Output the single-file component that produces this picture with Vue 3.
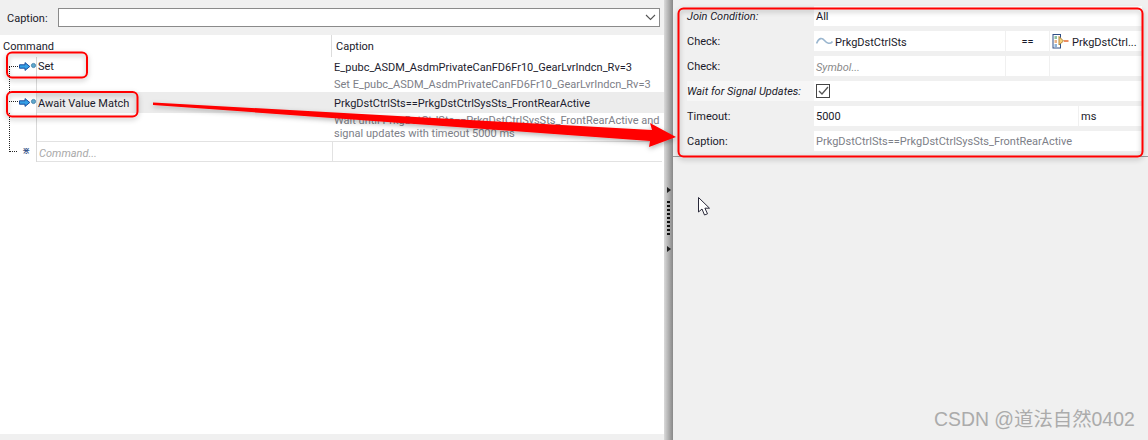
<script setup>
const waitLines = [
  'Wait until PrkgDstCtrlSts==PrkgDstCtrlSysSts_FrontRearActive and',
  'signal updates with timeout 5000 ms',
]
</script>

<template>
  <div class="page">
    <section class="left">
      <div class="captionbar">
        <span class="caplabel">Caption:</span>
        <div class="combo">
          <svg class="chev" width="11" height="7" viewBox="0 0 11 7"><path d="M1 1l4.500 4.500L10 1" fill="none" stroke="#555" stroke-width="1.1"/></svg>
        </div>
      </div>
      <div class="table">
        <div class="thead">
          <div class="c1 hc">Command</div>
          <div class="c2 hc">Caption</div>
        </div>
        <div class="tree-v"></div>
        <div class="row r-set">
          <div class="gut"><span class="dots"></span><svg class="cmd" width="18" height="11" viewBox="0 0 18 11"><path d="M0.500 2.800H6V0.600L10.800 4.500 6 8.400V6.200H0.500z" fill="#35a0e6" stroke="#1c4f9e"/><circle cx="14.500" cy="3.500" r="2.100" fill="#5fa8cc" stroke="#3a7aa5" stroke-width=".8"/></svg></div>
          <div class="c1 cell">Set</div>
          <div class="c2 cell two">
            <div class="main">E_pubc_ASDM_AsdmPrivateCanFD6Fr10_GearLvrIndcn_Rv=3</div>
            <div class="sub">Set E_pubc_ASDM_AsdmPrivateCanFD6Fr10_GearLvrIndcn_Rv=3</div>
          </div>
        </div>
        <div class="row r-await">
          <div class="hl">
            <div class="gut"><span class="dots"></span><svg class="cmd" width="18" height="11" viewBox="0 0 18 11"><path d="M0.500 2.800H6V0.600L10.800 4.500 6 8.400V6.200H0.500z" fill="#35a0e6" stroke="#1c4f9e"/><circle cx="14.500" cy="3.500" r="2.100" fill="#5fa8cc" stroke="#3a7aa5" stroke-width=".8"/></svg></div>
            <div class="c1 cell">Await Value Match</div>
            <div class="c2 cell"><div class="main">PrkgDstCtrlSts==PrkgDstCtrlSysSts_FrontRearActive</div></div>
          </div>
          <div class="sublines">
            <div class="gut"></div>
            <div class="c1"></div>
            <div class="c2 sub wrap"><div v-for="line in waitLines" :key="line">{{ line }}</div></div>
          </div>
        </div>
        <div class="row r-new">
          <div class="gut"><span class="dots last"></span><span class="star">⋇</span></div>
          <div class="c1 cell newcell">Command...</div>
          <div class="c2 cell"></div>
        </div>
      </div>
      <div class="bottomstrip"></div>
    </section>

    <div class="splitter">
      <span class="tri"></span>
      <span class="grip"></span>
      <span class="tri"></span>
    </div>

    <section class="right">
      <div class="form">
        <div class="frow">
          <div class="lab it">Join Condition:</div>
          <div class="val"><div class="f grow">All</div></div>
        </div>
        <div class="frow">
          <div class="lab">Check:</div>
          <div class="val">
            <div class="f sym">
              <svg width="17" height="10" viewBox="0 0 17 10"><path d="M0.500 7.500C3 1.500 6 1.500 8.500 4.500s5.500 4 8 1" fill="none" stroke="#9ab6cf" stroke-width="1.6"/></svg>
              <span>PrkgDstCtrlSts</span>
            </div>
            <div class="f op">==</div>
            <div class="f res">
              <svg width="17" height="15" viewBox="0 0 17 15"><rect x="1" y="0.500" width="7.500" height="13.500" fill="#fff" stroke="#2f4f86"/><rect x="2.500" y="2" width="2.500" height="3" fill="#8fc0a0"/><rect x="2.500" y="6" width="2.500" height="3" fill="#e9b489"/><rect x="2.500" y="10" width="2.500" height="3" fill="#8fb4d8"/><path d="M7 2.500l4.500 4.500L7 11z" fill="#f5d27a" stroke="#b3863a"/><path d="M12 7h4.500" stroke="#e8703a" stroke-width="1.600"/></svg>
              <span>PrkgDstCtrl...</span>
            </div>
          </div>
        </div>
        <div class="frow">
          <div class="lab">Check:</div>
          <div class="val">
            <div class="f sym ph"><span>Symbol...</span></div>
            <div class="f op"></div>
            <div class="f res"></div>
          </div>
        </div>
        <div class="frow">
          <div class="lab it lit">Wait for Signal Updates:</div>
          <div class="val"><div class="f grow chk"><span class="box"><svg width="11" height="10" viewBox="0 0 11 10"><path d="M1 5l3 3 6-7" fill="none" stroke="#555" stroke-width="1.3"/></svg></span></div></div>
        </div>
        <div class="frow">
          <div class="lab">Timeout:</div>
          <div class="val"><div class="f tm">5000</div><div class="f grow">ms</div></div>
        </div>
        <div class="frow">
          <div class="lab">Caption:</div>
          <div class="val"><div class="f grow gray">PrkgDstCtrlSts==PrkgDstCtrlSysSts_FrontRearActive</div></div>
        </div>
      </div>
      <div class="rule"></div>
    </section>

    <svg class="cursor" width="15" height="22" viewBox="0 0 15 22"><path d="M1.500 1.500V16l3.500-3 2.500 6 3-1.200-2.600-5.600h4.600z" fill="#fff" stroke="#2a2a3a" stroke-width="1"/></svg>

    <svg class="notes" width="1148" height="440" viewBox="0 0 1148 440">
      <defs>
        <filter id="sh" x="-10%" y="-30%" width="120%" height="170%">
          <feDropShadow dx="0" dy="2" stdDeviation="2.500" flood-color="#000" flood-opacity=".3"/>
        </filter>
      </defs>
      <g fill="none" stroke="#f00" stroke-width="2" filter="url(#sh)">
        <rect x="7" y="52.500" width="80" height="25" rx="5"/>
        <rect x="7" y="92" width="130.500" height="24.500" rx="5"/>
        <rect x="678.500" y="8.500" width="464" height="148" rx="5"/>
      </g>
      <path filter="url(#sh)" d="M153 102.500L652 130 650 123 676 137 649 147 650 141 153 105z" fill="#f00"/>
    </svg>

    <div class="wm">CSDN @道法自然0402</div>
  </div>
</template>

<style>
html, body { margin: 0; background: #f0f0f0; }
</style>

<style scoped>
.page { position: relative; display: flex; width: 1148px; height: 440px; overflow: hidden; background: #f0f0f0; font: 11px/15px Roboto, "Liberation Sans", sans-serif; color: #1a1a2a; }
.left { width: 664px; height: 440px; display: flex; flex-direction: column; }
.captionbar { height: 35px; display: flex; align-items: center; padding: 0 4px 0 7px; box-sizing: border-box; }
.caplabel { width: 51px; padding-top: 1px; }
.combo { flex: 1; height: 19px; box-sizing: border-box; border: 1px solid #8a8a8a; background: #fff; display: flex; align-items: center; justify-content: flex-end; padding-right: 3px; }
.table { flex: 1; background: #fff; position: relative; }
.thead { height: 22px; display: flex; }
.hc { line-height: 24px; }
.thead .c1 { width: 331px; padding-left: 3px; box-sizing: border-box; }
.thead .c2 { flex: 1; padding-left: 4px; border-left: 1px solid #dcdcdc; margin-right: 1px; }
.row { position: relative; }
.r-set { display: flex; height: 35px; }
.gut { width: 36px; flex: none; position: relative; border-right: 1px solid #d8d8d8; }
.cell { line-height: 19px; }
.row .c1 { width: 295px; box-sizing: border-box; flex: none; padding-left: 1px; line-height: 18px; }
.r-set .c1 { line-height: 20px; }
.row .c2 { flex: 1; padding-left: 2px; }
.main { height: 20px; line-height: 22px; white-space: nowrap; color: #1c1c2e; }
.sub { color: #7d8088; line-height: 15px; }
.two .sub { line-height: 15px; white-space: nowrap; }
.hl { display: flex; height: 21px; background: #ececec; }
.hl .gut { background: #fff; }
.hl .cell, .hl .main { line-height: 24px; }
.row .hl .c1 { line-height: 24px; }
.sublines { display: flex; height: 28px; }
.sublines .c1 { width: 295px; }
.wrap { white-space: nowrap; line-height: 14px; padding-top: 1px; }
.wrap div + div { margin-top: -1px; }
.r-new { display: flex; height: 21px; }
.row.r-new .c1 { width: 296px; padding-left: 2px; border: solid #e2e2e2; border-width: 1px 1px 1px 0; color: #a9a9a9; font-style: italic; line-height: 23px; }
.r-new .c2 { border: solid #e2e2e2; border-width: 1px 0; margin-right: 2px; }
.cmd { position: absolute; left: 19px; top: 5px; }
.hl .cmd { top: 6px; }
.dots { position: absolute; left: 9px; top: 9px; width: 9px; border-top: 1px dotted #222; }
.tree-v { position: absolute; left: 9px; top: 31px; height: 86px; border-left: 1px dotted #222; }
.star { position: absolute; left: 22px; top: 3px; font: 10px/14px "DejaVu Sans", sans-serif; color: #2f4f86; }
.dots.last { top: 10px; width: 8px; }
.bottomstrip { height: 6px; background: #f0f0f0; }
.splitter { width: 9px; flex: none; background: linear-gradient(90deg, #dadada, #888); display: flex; flex-direction: column; align-items: center; padding-top: 187px; box-sizing: border-box; height: 440px; }
.tri { width: 0; height: 0; border-left: 4px solid #222; border-top: 3.500px solid transparent; border-bottom: 3.500px solid transparent; margin-left: 1px; }
.grip { width: 3px; height: 36px; margin: 8px 0 9px; background: repeating-linear-gradient(180deg, #111 0 2px, transparent 2px 4px); }
.right { flex: 1; position: relative; }
.form { display: flex; flex-direction: column; padding: 6px 6px 0 14px; gap: 5px; }
.frow { display: flex; height: 20px; line-height: 22px; }
.lab { width: 127px; flex: none; }
.lit { background: #f6f6f6; }
.it { font-style: italic; }
.val { flex: 1; display: flex; gap: 1px; }
.f { background: #fff; padding-left: 2px; box-sizing: border-box; white-space: nowrap; }
.grow { flex: 1; }
.sym { width: 191px; display: flex; align-items: center; gap: 2px; }
.sym span, .res span { line-height: 15px; padding-top: 2px; }
.op { width: 43px; text-align: center; padding-left: 0; }
.res { flex: 1; display: flex; align-items: center; gap: 3px; }
.ph { color: #8a8a8a; font-style: italic; }
.chk { display: flex; align-items: center; }
.box { width: 12px; height: 12px; border: 1px solid #444; display: flex; align-items: center; justify-content: center; }
.tm { width: 264px; }
.gray { color: #7d8088; }
.rule { position: absolute; left: 0; right: 0; top: 156px; border-top: 1px solid #9a9a9a; }
.cursor { position: absolute; left: 697px; top: 196px; }
.notes { position: absolute; left: 0; top: 0; pointer-events: none; }
.wm { position: absolute; left: 934px; top: 407px; font: 19.400px/24px "Liberation Sans", "Noto Sans CJK SC", sans-serif; color: #ababab; }
</style>
